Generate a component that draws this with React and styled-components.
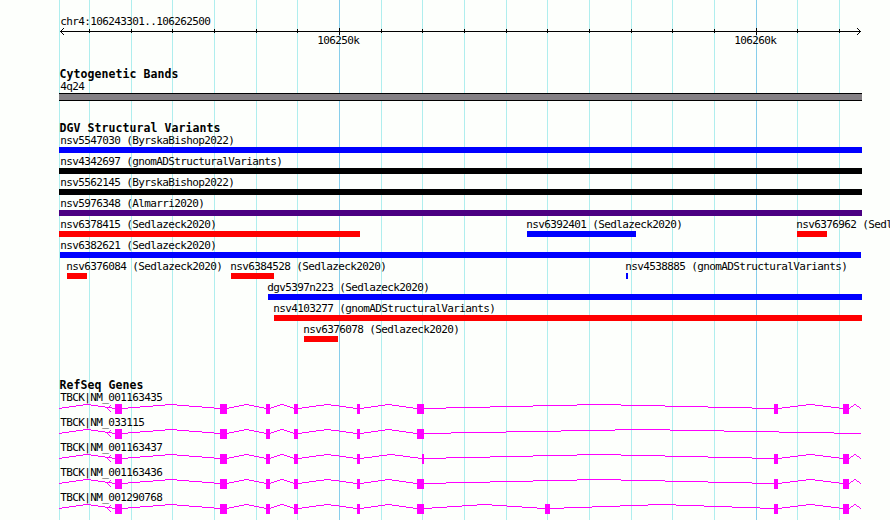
import React from 'react'
import styled, { createGlobalStyle } from 'styled-components'

const LEFT = 59
const RIGHT = 862

const minorTicks = [89, 131, 172, 214, 256, 297, 381, 422, 464, 506, 547, 589, 631, 672, 714, 797, 839]
const majorTicks = [
    { x: 339, label: '106250k' },
    { x: 756, label: '106260k' },
]

const variantRows = [
    [{ name: 'nsv5547030 (ByrskaBishop2022)', start: 59, end: 862, color: '#0000ff' }],
    [{ name: 'nsv4342697 (gnomADStructuralVariants)', start: 59, end: 862, color: '#000000' }],
    [{ name: 'nsv5562145 (ByrskaBishop2022)', start: 59, end: 862, color: '#000000' }],
    [{ name: 'nsv5976348 (Almarri2020)', start: 59, end: 862, color: '#4b0082' }],
    [
        { name: 'nsv6378415 (Sedlazeck2020)', start: 59, end: 360, color: '#ff0000' },
        { name: 'nsv6392401 (Sedlazeck2020)', start: 527, end: 636, color: '#0000ff' },
        { name: 'nsv6376962 (Sedlazeck2020)', start: 797, end: 827, color: '#ff0000' },
    ],
    [{ name: 'nsv6382621 (Sedlazeck2020)', start: 60, end: 861, color: '#0000ff' }],
    [
        { name: 'nsv6376084 (Sedlazeck2020)', start: 67, end: 87, color: '#ff0000' },
        { name: 'nsv6384528 (Sedlazeck2020)', start: 231, end: 274, color: '#ff0000' },
        { name: 'nsv4538885 (gnomADStructuralVariants)', start: 626, end: 628, color: '#0000ff' },
    ],
    [{ name: 'dgv5397n223 (Sedlazeck2020)', start: 268, end: 862, color: '#0000ff' }],
    [{ name: 'nsv4103277 (gnomADStructuralVariants)', start: 274, end: 862, color: '#ff0000' }],
    [{ name: 'nsv6376078 (Sedlazeck2020)', start: 304, end: 338, color: '#ff0000' }],
]

const firstExons = [[115, 122], [220, 227], [266, 270], [294, 298], [357, 360]]
const lastExons = [[774, 778], [843, 849]]

const genes = [
    { name: 'TBCK|NM_001163435', exons: [...firstExons, [417, 424], ...lastExons] },
    { name: 'TBCK|NM_033115', exons: [...firstExons, [417, 424]] },
    { name: 'TBCK|NM_001163437', exons: [...firstExons, [422, 424], ...lastExons] },
    { name: 'TBCK|NM_001163436', exons: [...firstExons, [417, 424], ...lastExons] },
    { name: 'TBCK|NM_001290768', exons: [...firstExons, [417, 424], [545, 550], ...lastExons] },
]

// one pixel high runs that climb four pixels to the middle and come back down
function intronRuns(from, to) {
    const half = (to - from) / 2
    const runs = []
    for (let x = from; x < to; x++) {
        const rise = Math.round(4 * (1 - Math.abs(x + 0.5 - from - half) / half))
        const y = 5 - rise
        const last = runs[runs.length - 1]
        if (last && last.y === y) {
            last.width += 1
        } else {
            runs.push({ x, y, width: 1 })
        }
    }
    return runs
}

function Grid() {
    return (
        <GridLines width="890" height="520">
            {[LEFT, ...minorTicks].map((x) => (
                <rect key={x} x={x} y="0" width="1" height="520" fill="#afeeee" />
            ))}
            {majorTicks.map(({ x }) => (
                <rect key={x} x={x} y="0" width="1" height="520" fill="#87ceeb" />
            ))}
        </GridLines>
    )
}

function Ruler() {
    return (
        <RulerPanel>
            <Label $x={60}>chr4:106243301..106262500</Label>
            <Drawing width="890" height="7">
                <rect x="60" y="3" width="801" height="1" />
                {[0, 1, 2, 3].map((i) => (
                    <g key={i}>
                        <rect x={60 + i} y={3 - i} width="1" height="1" />
                        <rect x={60 + i} y={3 + i} width="1" height="1" />
                        <rect x={860 - i} y={3 - i} width="1" height="1" />
                        <rect x={860 - i} y={3 + i} width="1" height="1" />
                    </g>
                ))}
                {minorTicks.map((x) => (
                    <rect key={x} x={x} y="1" width="1" height="4" />
                ))}
                {majorTicks.map(({ x }) => (
                    <rect key={x} x={x} y="0" width="1" height="7" />
                ))}
            </Drawing>
            <TickLabels>
                {majorTicks.map(({ x, label }) => (
                    <Label key={x} $x={x - 22}>{label}</Label>
                ))}
            </TickLabels>
        </RulerPanel>
    )
}

function Variant({ name, start, end, color }) {
    return (
        <VariantBox>
            <Label $x={Math.max(start - 1, 60)}>{name}</Label>
            <Bar $start={start} $end={end} $color={color} />
        </VariantBox>
    )
}

function Gene({ name, exons }) {
    const edges = [LEFT, ...exons.flat(), 861]
    const introns = []
    for (let i = 0; i < edges.length; i += 2) {
        introns.push([edges[i], edges[i + 1]])
    }
    return (
        <GeneRow>
            <Label $x={60}>{name}</Label>
            <Drawing width="890" height="13" fill="#ff00ff">
                {introns.map(([from, to]) =>
                    intronRuns(from, to).map((run) => (
                        <rect key={run.x} x={run.x} y={run.y} width={run.width} height="1" />
                    ))
                )}
                {exons.map(([from, to]) => (
                    <rect key={from} x={from} y="1" width={to - from} height="10" />
                ))}
                {[0, 1, 2, 3].map((i) => (
                    <g key={i}>
                        <rect x={107 + i} y={5 - i} width="1" height="1" />
                        <rect x={107 + i} y={5 + i} width="1" height="1" />
                    </g>
                ))}
            </Drawing>
        </GeneRow>
    )
}

function App() {
    return (
        <Page>
            <GlobalStyle />
            <Grid />
            <Ruler />
            <Track $gap={21}>
                <Title>Cytogenetic Bands</Title>
                <Label $x={60}>4q24</Label>
                <Band />
            </Track>
            <Track $gap={35}>
                <Title>DGV Structural Variants</Title>
                {variantRows.map((row) => (
                    <VariantRow key={row[0].name}>
                        {row.map((variant) => (
                            <Variant key={variant.name} {...variant} />
                        ))}
                    </VariantRow>
                ))}
            </Track>
            <Track $gap={0}>
                <Title>RefSeq Genes</Title>
                {genes.map((gene) => (
                    <Gene key={gene.name} {...gene} />
                ))}
            </Track>
        </Page>
    )
}

export default App

const GlobalStyle = createGlobalStyle`
body {
    margin: 0;
    background: #fdfffc;
}
`
const Page = styled.div`
position: relative;
width: 890px;
height: 520px;
overflow: hidden;
background: #fdfffc;
color: #000;
font-family: "DejaVu Sans Mono", monospace;
`
const GridLines = styled.svg`
position: absolute;
top: 0;
left: 0;
z-index: 0;
shape-rendering: crispEdges;
`
const Drawing = styled.svg`
display: block;
shape-rendering: crispEdges;
`
const RulerPanel = styled.div`
position: relative;
padding-top: 15px;
height: 53px;

> svg {
    margin-top: 1px;
}
`
const TickLabels = styled.div`
display: grid;
margin-top: -1px;

> * {
    grid-area: 1 / 1;
}
`
const Track = styled.section`
position: relative;
margin-bottom: ${(props) => props.$gap}px;
`
const Title = styled.div`
height: 12px;
padding-left: 59.4px;
font-size: 11.5px;
font-weight: bold;
line-height: 12px;
letter-spacing: 0.077px;
white-space: pre;
`
const Label = styled.div`
height: 12px;
width: 0;
margin-left: ${(props) => props.$x + 0.2}px;
font-size: 11px;
line-height: 14px;
letter-spacing: -0.622px;
white-space: pre;
`
const Band = styled.div`
box-sizing: border-box;
width: ${RIGHT - LEFT}px;
height: 8px;
margin: 1px 0 0 ${LEFT}px;
background: #848084;
border: solid #000;
border-width: 1px 0;
`
const VariantRow = styled.div`
display: grid;
height: 21px;
`
const VariantBox = styled.div`
grid-area: 1 / 1;
`
const Bar = styled.div`
width: ${(props) => props.$end - props.$start}px;
height: 6px;
margin: 1px 0 0 ${(props) => props.$start}px;
background: ${(props) => props.$color};
`
const GeneRow = styled.div`
height: 25px;
`
